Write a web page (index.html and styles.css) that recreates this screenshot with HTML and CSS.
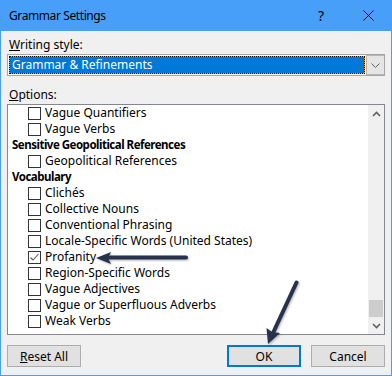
FILE: index.html
```html
<!DOCTYPE html>
<html lang="en">
<head>
  <meta charset="UTF-8" />
  <title>Grammar Settings</title>
  <link rel="stylesheet" href="styles.css">
</head>
<body>
  <div class="dialog">
    <div class="titlebar">
      <span class="title">Grammar Settings</span>
      <span class="help">?</span>
      <span class="close">
        <svg width="11" height="11" viewBox="0 0 11 11"><path d="M0.5 0.5 L10.5 10.5 M10.5 0.5 L0.5 10.5" stroke="#000" stroke-width="1"/></svg>
      </span>
    </div>

    <div class="content">
      <div class="label"><u>W</u>riting style:</div>
      <div class="select">
        <div class="select-value"><span>Grammar &amp; Refinements</span></div>
        <div class="select-btn">
          <svg width="9" height="5" viewBox="0 0 9 5"><path d="M0.5 0.5 L4.5 4.5 L8.5 0.5" fill="none" stroke="#606060" stroke-width="1"/></svg>
        </div>
      </div>

      <div class="label options-label"><u>O</u>ptions:</div>
      <div class="listbox">
        <ul class="items">
          <li class="item"><span class="check"></span>Vague Quantifiers</li>
          <li class="item"><span class="check"></span>Vague Verbs</li>
          <li class="group">Sensitive Geopolitical References</li>
          <li class="item"><span class="check"></span>Geopolitical References</li>
          <li class="group">Vocabulary</li>
          <li class="item"><span class="check"></span>Clichés</li>
          <li class="item"><span class="check"></span>Collective Nouns</li>
          <li class="item"><span class="check"></span>Conventional Phrasing</li>
          <li class="item"><span class="check"></span>Locale-Specific Words (United States)</li>
          <li class="item"><span class="check checked">
            <svg width="11" height="11" viewBox="0 0 11 11"><path d="M1.5 5.5 L4 8 L9.5 2" fill="none" stroke="#5a5a5a" stroke-width="1.1"/></svg>
          </span>Profanity</li>
          <li class="item"><span class="check"></span>Region-Specific Words</li>
          <li class="item"><span class="check"></span>Vague Adjectives</li>
          <li class="item"><span class="check"></span>Vague or Superfluous Adverbs</li>
          <li class="item"><span class="check"></span>Weak Verbs</li>
        </ul>
        <div class="scrollbar">
          <div class="scroll-arrow">
            <svg width="9" height="6" viewBox="0 0 9 6"><path d="M1 5 L4.5 1.5 L8 5" fill="none" stroke="#606060" stroke-width="1.6"/></svg>
          </div>
          <div class="scroll-track"><div class="scroll-thumb"></div></div>
          <div class="scroll-arrow">
            <svg width="9" height="6" viewBox="0 0 9 6"><path d="M1 1 L4.5 4.5 L8 1" fill="none" stroke="#606060" stroke-width="1.6"/></svg>
          </div>
        </div>
      </div>

      <div class="buttons">
        <button class="btn"><u>R</u>eset All</button>
        <div class="spacer"></div>
        <button class="btn default">OK</button>
        <button class="btn">Cancel</button>
      </div>
    </div>

    <svg class="arrows" width="392" height="376" viewBox="0 0 392 376">
      <path d="M186 257.5 L106 257.5" stroke="#27334d" stroke-width="4" stroke-linecap="round"/>
      <polygon points="96,258 111,252 108,258 111,264" fill="#27334d"/>
      <path d="M296.5 282.5 L273 333" stroke="#27334d" stroke-width="4" stroke-linecap="round"/>
      <polygon points="268,344 266.5,328 272,332 280,333" fill="#27334d"/>
    </svg>
  </div>
</body>
</html>
```

FILE: styles.css
```css
* {
  box-sizing: border-box;
}
body {
  margin: 0;
  font-family: "Noto Sans", "Open Sans", sans-serif;
  font-size: 12px;
  color: #000;
  background: #fff;
}
.dialog {
  position: relative;
  width: 392px;
  height: 376px;
  background: #f0f0f0;
  border: 1px solid #479ffa;
  border-top: none;
  display: flex;
  flex-direction: column;
}
.titlebar {
  height: 31px;
  margin: 0 -1px;
  background: #479ffa;
  display: flex;
  align-items: center;
  padding: 0 0 0 9px;
}
.title {
  flex: 1;
  font-size: 12px;
  letter-spacing: -0.4px;
  margin-top: -1px;
}
.help {
  width: 12px;
  font-size: 14px;
  margin-right: 33px;
  margin-top: -1px;
}
.close {
  display: flex;
  width: 11px;
  margin-right: 18px;
}
.content {
  flex: 1;
  display: flex;
  flex-direction: column;
  padding: 6px 6px 0 6px;
}
.label {
  line-height: 16px;
  height: 17px;
  padding-left: 2px;
}
.select {
  display: flex;
  height: 22px;
  border: 1px solid #a6a6a6;
  background: #fff;
}
.select-value {
  flex: 1;
  margin: 1px 0 1px 1px;
  background: #f39a2c;
  display: flex;
}
.select-value span {
  flex: 1;
  background: #0078d7;
  background-clip: padding-box;
  border: 1px dotted #111;
  color: #fff;
  line-height: 16px;
  padding-left: 2px;
}
.select-btn {
  width: 18px;
  margin-left: 1px;
  background: #e5e5e5;
  border: 1px solid #b4b4b4;
  border-width: 1px 0 1px 1px;
  display: flex;
  align-items: center;
  justify-content: center;
}
.options-label {
  margin-top: 11px;
  height: 17px;
}
.listbox {
  height: 231px;
  border: 1px solid #828790;
  background: #fff;
  display: flex;
}
.items {
  flex: 1;
  list-style: none;
  margin: 0;
  padding: 0;
  overflow: hidden;
}
.item, .group {
  height: 16px;
  line-height: 16px;
  white-space: nowrap;
  display: flex;
  align-items: center;
}
.item {
  padding-left: 20px;
}
.group {
  padding-left: 4px;
  font-weight: bold;
  font-size: 11.5px;
  letter-spacing: -0.5px;
}
.check {
  width: 13px;
  height: 13px;
  border: 1px solid #333;
  background: #fff;
  margin-right: 4px;
  display: flex;
  align-items: center;
  justify-content: center;
}
.scrollbar {
  width: 16px;
  background: #f0f0f0;
  display: flex;
  flex-direction: column;
}
.scroll-arrow {
  height: 17px;
  display: flex;
  align-items: center;
  justify-content: center;
}
.scroll-track {
  flex: 1;
  display: flex;
  flex-direction: column;
  justify-content: flex-end;
}
.scroll-thumb {
  height: 17px;
  margin: 0 1px;
  background: #cdcdcd;
}
.buttons {
  display: flex;
  margin-top: 10px;
  gap: 10px;
}
.spacer {
  flex: 1;
}
.btn {
  width: 74px;
  height: 22px;
  padding: 0;
  font-family: inherit;
  font-size: 12px;
  color: #000;
  background: #e1e1e1;
  border: 1px solid #adadad;
}
.btn.default {
  border: 2px solid #0078d7;
}
.arrows {
  position: absolute;
  left: -1px;
  top: 0;
  pointer-events: none;
  filter: drop-shadow(1px 1px 1px rgba(0, 0, 0, 0.3));
}
```
